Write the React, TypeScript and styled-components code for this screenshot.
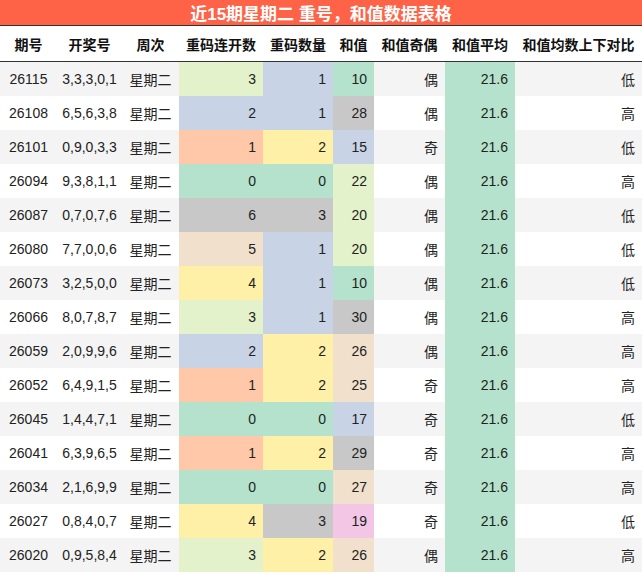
import React from "react";
import styled, { createGlobalStyle } from "styled-components";

const G = createGlobalStyle`
  body { margin: 0; font-family: "Liberation Sans", "Noto Sans CJK SC", sans-serif; background: #fff; }
`;
const C: Record<string, string> = {
  lg: "#e3f2cb", b: "#c8d4e6", m: "#b4e2cc", g: "#c8c8c8", p: "#ffc8a8",
  y: "#fff0a8", be: "#f0e0cc", pk: "#f2c6e4",
};
const rows: [string, string, string, string, string, string, string, string, string][] = [
  ["26115","3,3,3,0,1","3","lg","1","b","10","m","偶","低"],
  ["26108","6,5,6,3,8","2","b","1","b","28","g","偶","高"],
  ["26101","0,9,0,3,3","1","p","2","y","15","b","奇","低"],
  ["26094","9,3,8,1,1","0","m","0","m","22","lg","偶","高"],
  ["26087","0,7,0,7,6","6","g","3","g","20","lg","偶","低"],
  ["26080","7,7,0,0,6","5","be","1","b","20","lg","偶","低"],
  ["26073","3,2,5,0,0","4","y","1","b","10","m","偶","低"],
  ["26066","8,0,7,8,7","3","lg","1","b","30","g","偶","高"],
  ["26059","2,0,9,9,6","2","b","2","y","26","be","偶","高"],
  ["26052","6,4,9,1,5","1","p","2","y","25","be","奇","高"],
  ["26045","1,4,4,7,1","0","m","0","m","17","b","奇","低"],
  ["26041","6,3,9,6,5","1","p","2","y","29","g","奇","高"],
  ["26034","2,1,6,9,9","0","m","0","m","27","be","奇","高"],
  ["26027","0,8,4,0,7","4","y","3","g","19","pk","奇","低"],
  ["26020","0,9,5,8,4","3","lg","2","y","26","be","偶","高"],
] as any;
const cols = "57px 65px 57px 84px 70px 41px 71px 70px 127px";
const Title = styled.div`
  height: 25px; background: #ff6347; border-bottom: 1px solid #333; color: #fff;
  font-weight: bold; font-size: 17px; display: flex; align-items: center; justify-content: center;
`;
const Row = styled.div<{ $alt?: boolean; $h: number }>`
  display: grid; grid-template-columns: ${cols}; height: ${(p) => p.$h}px;
  background: ${(p) => (p.$alt ? "#f4f4f4" : "#fff")};
`;
const Head = styled(Row)` border-bottom: 1px solid #333; `;
const H = styled.div`
  display: flex; align-items: center; justify-content: center; font-weight: bold; font-size: 14px; color: #111;
`;
const Cell = styled.div<{ $bg?: string; $al?: string }>`
  display: flex; align-items: center; justify-content: ${(p) => p.$al || "flex-end"};
  padding: 0 7px; font-size: 14px; color: #222; background: ${(p) => p.$bg || "transparent"};
`;
const heads = ["期号","开奖号","周次","重码连开数","重码数量","和值","和值奇偶","和值平均","和值均数上下对比"];
export default function App() {
  return (
    <>
      <G />
      <Title>近15期星期二 重号，和值数据表格</Title>
      <Head $h={35}>{heads.map((h) => <H key={h}>{h}</H>)}</Head>
      {rows.map((r: any, i) => (
        <Row key={i} $h={34} $alt={i % 2 === 0}>
          <Cell $al="center">{r[0]}</Cell>
          <Cell $al="center">{r[1]}</Cell>
          <Cell $al="center">星期二</Cell>
          <Cell $bg={C[r[3]]}>{r[2]}</Cell>
          <Cell $bg={C[r[5]]}>{r[4]}</Cell>
          <Cell $bg={C[r[7]]}>{r[6]}</Cell>
          <Cell>{r[8]}</Cell>
          <Cell $bg={C.m}>21.6</Cell>
          <Cell>{r[9]}</Cell>
        </Row>
      ))}
    </>
  );
}
